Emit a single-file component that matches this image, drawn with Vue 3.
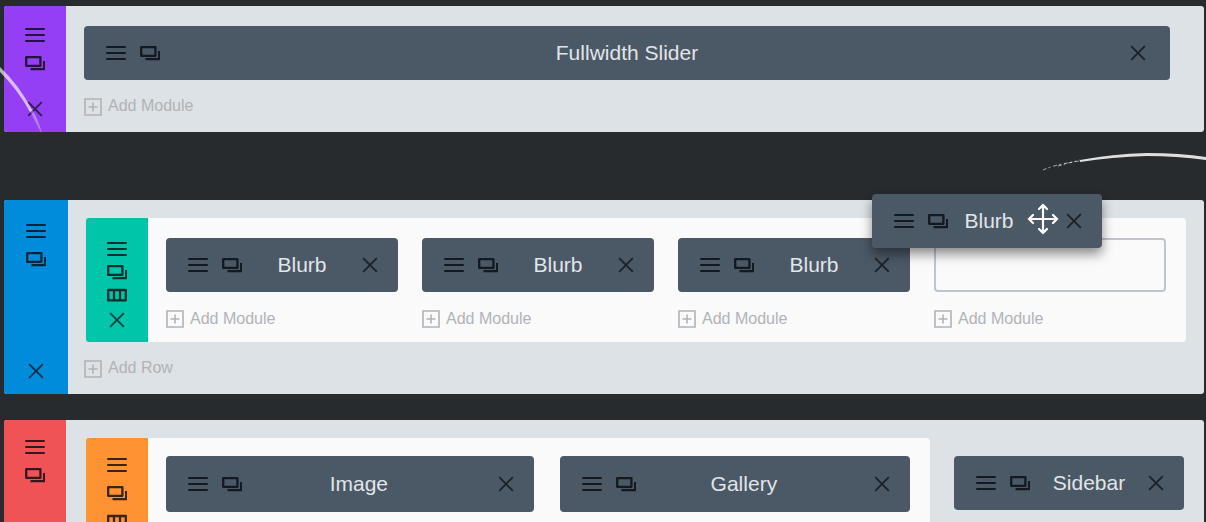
<script setup>
import { h } from 'vue'

const shapes = {
  menu: { w: 20, d: 'M1 2H19M1 8H19M1 14H19', s: 2 },
  clone: { w: 20, d: 'M1.2 2.2H15.4V10.8H1.2ZM5.5 14.2H19.2V6', s: 2.3 },
  columns: { w: 20, d: 'M1.2 3H18.8V13.4H1.2ZM7 3V13M13 3V13', s: 2.3 },
  close: { w: 16, d: 'M1.2 1.2L14.8 14.8M14.8 1.2L1.2 14.8', s: 1.8 }
}

const labels = { menu: 'Settings', clone: 'Duplicate', columns: 'Change columns', close: 'Remove' }

const IconButton = (props) => {
  const shape = shapes[props.name]
  return h('button', { type: 'button', class: ['icon-button', props.name], 'aria-label': labels[props.name] }, [
    h('svg', { width: shape.w, height: 16, viewBox: `0 0 ${shape.w} 16`, 'aria-hidden': 'true' }, [
      h('path', { d: shape.d, fill: 'none', stroke: 'currentColor', 'stroke-width': shape.s, 'stroke-linejoin': 'round', 'stroke-linecap': props.name === 'menu' ? 'round' : 'butt' })
    ])
  ])
}
IconButton.props = ['name']

const ModuleBar = (props) =>
  h('article', { class: 'module' }, [
    h('div', { class: 'tools' }, [h(IconButton, { name: 'menu' }), h(IconButton, { name: 'clone' })]),
    h('span', { class: 'title' }, props.title),
    h(IconButton, { name: 'close' })
  ])
ModuleBar.props = ['title']

const AddButton = (props) =>
  h('button', { type: 'button', class: 'add' }, [
    h('svg', { width: 18, height: 18, viewBox: '0 0 18 18', 'aria-hidden': 'true' }, [
      h('path', { d: 'M1 1H17V17H1ZM9 4.5V13.5M4.5 9H13.5', fill: 'none', stroke: 'currentColor', 'stroke-width': 1.6 })
    ]),
    h('span', props.label)
  ])
AddButton.props = ['label']

const blurbs = [1, 2, 3]
</script>

<template>
  <main class="builder">
    <section class="section first">
      <aside class="rail purple">
        <IconButton name="menu" />
        <IconButton name="clone" />
        <IconButton name="close" />
      </aside>
      <div class="body">
        <ModuleBar title="Fullwidth Slider" class="full" />
        <AddButton label="Add Module" class="outer" />
      </div>
    </section>

    <section class="section second">
      <aside class="rail blue">
        <IconButton name="menu" />
        <IconButton name="clone" />
        <IconButton name="close" />
      </aside>
      <div class="body">
        <div class="row">
          <aside class="rail teal">
            <IconButton name="menu" />
            <IconButton name="clone" />
            <IconButton name="columns" />
            <IconButton name="close" />
          </aside>
          <div class="columns four">
            <div v-for="n in blurbs" :key="n" class="column">
              <ModuleBar title="Blurb" />
              <AddButton label="Add Module" />
            </div>
            <div class="column">
              <div class="slot"></div>
              <AddButton label="Add Module" />
              <div class="dragged">
                <ModuleBar title="Blurb" />
                <svg class="cursor" width="32" height="32" viewBox="0 0 32 32" aria-hidden="true">
                  <path d="M16 2V30M2 16H30M12 6L16 2L20 6M12 26L16 30L20 26M6 12L2 16L6 20M26 12L30 16L26 20" />
                </svg>
              </div>
            </div>
          </div>
        </div>
        <AddButton label="Add Row" class="outer" />
      </div>
    </section>

    <section class="section third">
      <aside class="rail red">
        <IconButton name="menu" />
        <IconButton name="clone" />
      </aside>
      <div class="body">
        <div class="row">
          <aside class="rail orange">
            <IconButton name="menu" />
            <IconButton name="clone" />
            <IconButton name="columns" />
          </aside>
          <div class="columns two">
            <ModuleBar title="Image" class="medium" />
            <ModuleBar title="Gallery" class="medium" />
          </div>
        </div>
        <ModuleBar title="Sidebar" class="sidebar" />
      </div>
    </section>

    <svg class="chalk left" width="44" height="68" viewBox="0 0 44 68" aria-hidden="true">
      <path d="M0 0L0 5Q18 23 30 45L32 43Q19 18 0 0Z" opacity=".65" />
      <path d="M29 42L32 42Q39 54 42 67Q36 56 29 42Z" opacity=".35" />
    </svg>
    <svg class="chalk right" width="164" height="20" viewBox="0 0 164 20" aria-hidden="true">
      <path d="M38 8Q70 2 105 1Q138 1 164 5V8Q134 4 105 4Q70 5 38 10Z" opacity=".85" />
      <path d="M1 18Q14 12 38 9M16 14L38 8" fill="none" stroke="#fff" stroke-dasharray="4 2 2 3" opacity=".6" />
    </svg>
  </main>
</template>

<style>
body {
  margin: 0;
  background: #272b2e;
}
</style>

<style scoped>
.builder {
  position: relative;
  box-sizing: border-box;
  height: 100vh;
  padding: 6px 2px 0 4px;
  overflow: hidden;
  background: #272b2e;
  font-family: "Liberation Sans", Arial, sans-serif;
}

.builder :deep(button) {
  display: flex;
  padding: 0;
  border: 0;
  background: none;
  font: inherit;
  cursor: pointer;
}

.builder :deep(svg) {
  display: block;
}

.builder :deep(.icon-button) {
  color: rgba(6, 10, 16, 0.8);
}

.builder :deep(.close) {
  color: rgba(6, 10, 16, 0.7);
}

.section {
  display: flex;
  border-radius: 3px;
  background: #dde2e6;
}

.body {
  flex: 1;
  min-width: 0;
}

.rail {
  display: flex;
  flex: none;
  flex-direction: column;
  align-items: center;
  gap: 12px;
  box-sizing: border-box;
  width: 62px;
  border-radius: 3px 0 0 3px;
}

.purple { padding: 21px 0 15px; background: #953ff5; }
.blue { width: 64px; padding: 23px 0 15px; background: #008bdb; }
.teal { gap: 7px; padding: 23px 0 14px; background: #00c5a9; }
.red { padding-top: 19px; background: #f05355; }
.orange { padding-top: 19px; background: #ff9232; }

.purple :deep(.close),
.blue :deep(.close) {
  margin-top: auto;
}

.first .body { padding: 20px 34px 16px 18px; }

.second { margin-top: 68px; }
.second .body { padding: 18px 18px 16px 16px; }
.second .row { margin-left: 2px; }

.third { margin-top: 26px; }
.third .body {
  display: flex;
  align-items: flex-start;
  gap: 24px;
  padding: 18px 20px;
}
.third .row { flex: 1; }

.row {
  display: flex;
  border-radius: 4px;
  background: #fafafa;
}

.columns {
  display: grid;
  flex: 1;
}

.four {
  grid-template-columns: repeat(4, 1fr);
  gap: 24px;
  padding: 20px 20px 14px 18px;
}

.two {
  grid-template-columns: 21fr 20fr;
  gap: 26px;
  padding: 18px 20px 40px 18px;
}

.column { position: relative; }

.builder :deep(.module) {
  display: flex;
  align-items: center;
  box-sizing: border-box;
  height: 54px;
  padding: 0 20px 0 22px;
  border-radius: 4px;
  background: #4b5865;
}

.builder :deep(.tools) {
  display: flex;
  gap: 14px;
}

.builder :deep(.title) {
  flex: 1;
  color: #e1e5e9;
  font-size: 21px;
  line-height: 24px;
  text-align: center;
}

.builder :deep(.full) { padding-right: 24px; }
.builder :deep(.full .title) { padding-right: 36px; }
.builder :deep(.medium) { height: 56px; }
.builder :deep(.medium .title) { padding-right: 22px; }
.builder :deep(.sidebar) {
  width: 230px;
  margin-top: 18px;
}

.builder :deep(.add) {
  align-items: center;
  gap: 6px;
  height: 18px;
  margin-top: 18px;
  color: #b0b3b6;
  font-size: 16px;
  line-height: 18px;
}

.builder :deep(.outer) {
  align-items: flex-start;
  line-height: 16px;
}

.slot {
  box-sizing: border-box;
  height: 54px;
  border: 2px solid #bdc6cf;
  border-radius: 4px;
}

.dragged {
  position: absolute;
  top: -44px;
  left: -62px;
  z-index: 2;
  width: 230px;
  border-radius: 4px;
  box-shadow: 0 6px 12px rgba(0, 0, 0, 0.45);
}

.dragged :deep(.title) { padding-right: 36px; }

.cursor {
  position: absolute;
  top: 9px;
  left: 155px;
  fill: none;
  stroke: #fff;
  stroke-width: 2.2;
  stroke-linecap: round;
}

.chalk {
  position: absolute;
  fill: #fff;
  pointer-events: none;
}

.left { top: 67px; left: 0; }
.right { top: 152px; right: 0; }
</style>
